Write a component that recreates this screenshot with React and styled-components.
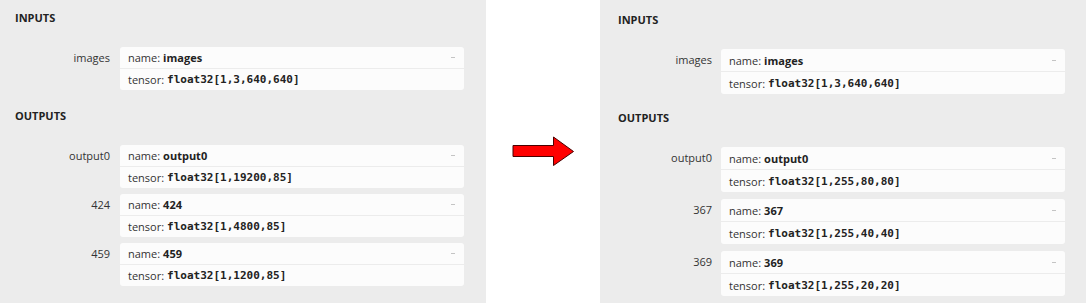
import styled, { createGlobalStyle } from "styled-components";

const GlobalStyle = createGlobalStyle`
    html, body {
        margin: 0;
        padding: 0;
        background: #ffffff;
    }

    body {
        font-family: "Open Sans", "Noto Sans", sans-serif;
        font-size: 11px;
        color: #333;
    }
`;

const Page = styled.div`
    display: flex;
    width: 1086px;
    height: 303px;
    overflow: hidden;
`;

const Panel = styled.div`
    width: 486px;
    height: 303px;
    box-sizing: border-box;
    background: #ececec;
    padding: ${props => (props.$tall ? "10px 21px 0 18px" : "8px 22px 0 15px")};
    display: flex;
    flex-direction: column;
    gap: ${props => (props.$tall ? "14px" : "16px")};
`;

const Middle = styled.div`
    width: 114px;
    display: flex;
    align-items: center;
    justify-content: center;
`;

const Section = styled.div`
    display: flex;
    flex-direction: column;
`;

const SectionTitle = styled.div`
    font-weight: 700;
    line-height: 20px;
    color: #222;
    margin-bottom: ${props => (props.$tall ? "19px" : "19px")};
`;

const List = styled.div`
    display: flex;
    flex-direction: column;
    gap: ${props => (props.$tall ? "7px" : "6px")};
`;

const Entry = styled.div`
    display: flex;
    align-items: flex-start;
    gap: ${props => (props.$tall ? "9px" : "10px")};
`;

const Label = styled.div`
    width: ${props => (props.$tall ? "94px" : "95px")};
    text-align: right;
    flex-shrink: 0;
    line-height: ${props => (props.$tall ? "22px" : "21px")};
    color: #333;
`;

const Card = styled.div`
    flex: 1;
    background: #fcfcfc;
    border-radius: 3px;
    display: flex;
    flex-direction: column;
`;

const Row = styled.div`
    display: flex;
    align-items: center;
    padding: 0 8px;
    height: ${props => props.$h}px;
    border-top: ${props => (props.$line ? "1px solid #ececec" : "none")};
    color: #333;
`;

const Value = styled.span`
    font-weight: 700;
    color: #222;
    margin-left: 3px;
`;

const Mono = styled.span`
    font-family: "DejaVu Sans Mono", "Liberation Mono", monospace;
    font-weight: 700;
    color: #222;
    margin-left: 3px;
`;

const Toggle = styled.span`
    margin-left: auto;
    margin-right: 1px;
    width: 4px;
    height: 1px;
    background: #c4c4c4;
`;

function Arrow() {
    return (
        <svg width="63" height="31" viewBox="0 0 63 31">
            <polygon
                points="1,9.5 41.5,9.5 41.5,1 61.5,15.5 41.5,29.5 41.5,20.5 1,20.5"
                fill="#ff0000"
                stroke="#4a0000"
                strokeWidth="1"
            />
        </svg>
    );
}

function Item({ label, name, type, tall }) {
    return (
        <Entry $tall={tall}>
            <Label $tall={tall}>{label}</Label>
            <Card>
                <Row $h={tall ? 22 : 21}>
                    name:<Value>{name}</Value>
                    <Toggle />
                </Row>
                <Row $h={tall ? 22 : 21} $line>
                    tensor:<Mono>{type}</Mono>
                </Row>
            </Card>
        </Entry>
    );
}

function Model({ inputs, outputs, tall }) {
    return (
        <Panel $tall={tall}>
            <Section>
                <SectionTitle $tall={tall}>INPUTS</SectionTitle>
                <List $tall={tall}>
                    {inputs.map(item => (
                        <Item key={item.name} {...item} label={item.name} tall={tall} />
                    ))}
                </List>
            </Section>
            <Section>
                <SectionTitle $tall={tall}>OUTPUTS</SectionTitle>
                <List $tall={tall}>
                    {outputs.map(item => (
                        <Item key={item.name} {...item} label={item.name} tall={tall} />
                    ))}
                </List>
            </Section>
        </Panel>
    );
}

const before = {
    inputs: [{ name: "images", type: "float32[1,3,640,640]" }],
    outputs: [
        { name: "output0", type: "float32[1,19200,85]" },
        { name: "424", type: "float32[1,4800,85]" },
        { name: "459", type: "float32[1,1200,85]" },
    ],
};

const after = {
    inputs: [{ name: "images", type: "float32[1,3,640,640]" }],
    outputs: [
        { name: "output0", type: "float32[1,255,80,80]" },
        { name: "367", type: "float32[1,255,40,40]" },
        { name: "369", type: "float32[1,255,20,20]" },
    ],
};

export default function App() {
    return (
        <>
            <GlobalStyle />
            <Page>
                <Model {...before} />
                <Middle>
                    <Arrow />
                </Middle>
                <Model {...after} tall />
            </Page>
        </>
    );
}
